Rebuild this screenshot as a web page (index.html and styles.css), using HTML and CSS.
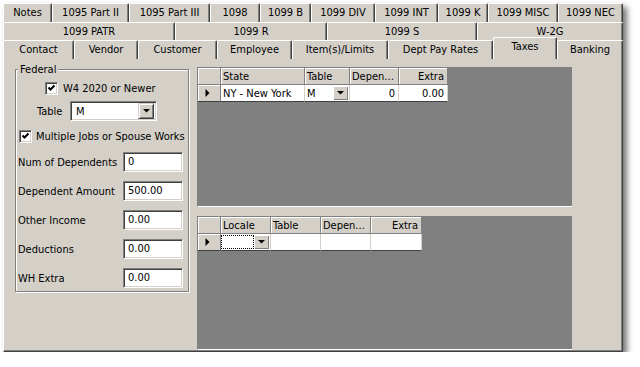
FILE: index.html
```html
<!DOCTYPE html>
<html>
<head>
<meta charset="utf-8">
<link rel="stylesheet" href="styles.css">
</head>
<body>
<div class="window">
  <div class="tabrow row1">
    <div class="tab">Notes</div>
    <div class="tab">1095 Part II</div>
    <div class="tab">1095 Part III</div>
    <div class="tab">1098</div>
    <div class="tab">1099 B</div>
    <div class="tab">1099 DIV</div>
    <div class="tab">1099 INT</div>
    <div class="tab">1099 K</div>
    <div class="tab">1099 MISC</div>
    <div class="tab">1099 NEC</div>
  </div>
  <div class="tabrow row2">
    <div class="tab">1099 PATR</div>
    <div class="tab">1099 R</div>
    <div class="tab">1099 S</div>
    <div class="tab">W-2G</div>
  </div>
  <div class="tabrow row3">
    <div class="tab">Contact</div>
    <div class="tab">Vendor</div>
    <div class="tab">Customer</div>
    <div class="tab">Employee</div>
    <div class="tab">Item(s)/Limits</div>
    <div class="tab">Dept Pay Rates</div>
    <div class="tab sel">Taxes</div>
    <div class="tab">Banking</div>
  </div>
  <div class="panel">
    <div class="group">
      <span class="legend">Federal</span>
      <div class="chkrow w4">
        <span class="chk"><svg width="9" height="9" viewBox="0 0 9 9"><path d="M1.5 3.5L3.5 5.5L7.5 1.5" fill="none" stroke="#000" stroke-width="2"/></svg></span>
        <span>W4 2020 or Newer</span>
      </div>
      <div class="tablerow">
        <span class="tlabel">Table</span>
        <div class="combo">
          <span class="val">M</span>
          <span class="dbtn"><svg width="7" height="4" viewBox="0 0 7 4"><path d="M0 0H7L3.5 3.6Z" fill="#000"/></svg></span>
        </div>
      </div>
      <div class="chkrow mj">
        <span class="chk"><svg width="9" height="9" viewBox="0 0 9 9"><path d="M1.5 3.5L3.5 5.5L7.5 1.5" fill="none" stroke="#000" stroke-width="2"/></svg></span>
        <span>Multiple Jobs or Spouse Works</span>
      </div>
      <div class="field"><span class="flabel">Num of Dependents</span><div class="input">0</div></div>
      <div class="field"><span class="flabel">Dependent Amount</span><div class="input">500.00</div></div>
      <div class="field"><span class="flabel">Other Income</span><div class="input">0.00</div></div>
      <div class="field"><span class="flabel">Deductions</span><div class="input">0.00</div></div>
      <div class="field"><span class="flabel">WH Extra</span><div class="input">0.00</div></div>
    </div>
    <div class="grids">
      <div class="grid upper">
        <table class="gt gt-upper">
          <colgroup><col class="w23"><col class="w84"><col class="w45"><col class="w49"><col class="w49"></colgroup>
          <tr><th class="ind"></th><th>State</th><th>Table</th><th>Depen...</th><th class="r">Extra</th></tr>
          <tr>
            <td class="ind"><svg width="5" height="8" viewBox="0 0 5 8"><path d="M0.5 0L4.5 4L0.5 8Z" fill="#000"/></svg></td>
            <td>NY - New York</td>
            <td class="cb"><div class="cellcombo"><span>M</span><span class="gbtn"><svg width="7" height="4" viewBox="0 0 7 4"><path d="M0 0H7L3.5 3.6Z" fill="#000"/></svg></span></div></td>
            <td class="r">0</td>
            <td class="r">0.00</td>
          </tr>
        </table>
      </div>
      <div class="grid lower">
        <table class="gt gt-lower">
          <colgroup><col class="w23"><col class="w50"><col class="w50"><col class="w50"><col class="w51"></colgroup>
          <tr><th class="ind"></th><th>Locale</th><th>Table</th><th>Depen...</th><th class="r">Extra</th></tr>
          <tr>
            <td class="ind"><svg width="5" height="8" viewBox="0 0 5 8"><path d="M0.5 0L4.5 4L0.5 8Z" fill="#000"/></svg></td>
            <td class="cb"><div class="cellcombo"><span class="focus"></span><span class="gbtn"><svg width="7" height="4" viewBox="0 0 7 4"><path d="M0 0H7L3.5 3.6Z" fill="#000"/></svg></span></div></td>
            <td></td>
            <td></td>
            <td></td>
          </tr>
        </table>
      </div>
    </div>
  </div>
</div>
</body>
</html>
```
FILE: styles.css
```css
* { box-sizing: border-box; }
html, body { margin: 0; background: #fff; }
body {
  font-family: "DejaVu Sans Condensed", "DejaVu Sans", sans-serif;
  font-stretch: condensed;
  font-size: 11px;
  color: #000;
}
.window {
  width: 620px;
  margin: 3px 0 0 3px;
  background: #d4d0c8;
  box-shadow: 4px 4px 6px rgba(0, 0, 0, 0.55);
}
.tabrow { display: grid; height: 18px; }
.row1 { height: 19px; grid-template-columns: 49px 77px 81px 50px 51px 64px 63px 50px 70px 65px; }
.row2 { grid-template-columns: 172px 152px 150px 146px; }
.row3 { grid-template-columns: 71px 64px 79px 75px 96px 105px 64px 66px; }
.tab {
  display: flex;
  align-items: center;
  justify-content: center;
  background: #d4d0c8;
  border-top: 1px solid #fff;
  border-left: 1px solid #fff;
  border-right: 1px solid #404040;
  box-shadow: inset -1px 0 #808080;
  border-radius: 2px 2px 0 0;
  white-space: nowrap;
  padding-bottom: 1px;
}
.tab.sel {
  margin-top: -3px;
  height: 22px;
  position: relative;
  z-index: 1;
  padding-bottom: 5px;
}
.panel {
  height: 294px;
  border: 1px solid;
  border-color: #fff #404040 #404040 #fff;
  box-shadow: inset -1px -1px #808080;
  display: flex;
  align-items: flex-start;
  gap: 8px;
  padding: 8px 0 0 11px;
}
.group {
  position: relative;
  width: 174px;
  height: 223px;
  margin-top: 2px;
  border: 1px solid #808080;
  box-shadow: inset 1px 1px #fff, 1px 1px #fff;
  display: flex;
  flex-direction: column;
}
.legend {
  position: absolute;
  top: -7px;
  left: 2px;
  padding: 0 2px;
  line-height: 13px;
  background: #d4d0c8;
}
.chkrow { display: flex; align-items: center; height: 13px; }
.chkrow.w4 { margin-top: 12px; padding-left: 29px; gap: 5px; }
.chkrow.mj { margin-top: 9px; padding-left: 3px; gap: 4px; }
.chk {
  width: 13px;
  height: 13px;
  flex: none;
  background: #fff;
  border: 1px solid;
  border-color: #808080 #fff #fff #808080;
  box-shadow: inset 1px 1px #404040, inset -1px -1px #d4d0c8;
  padding: 1px;
}
.chk svg { display: block; }
.tablerow { display: flex; align-items: center; height: 20px; margin-top: 6px; padding-left: 21px; }
.tlabel { width: 33px; }
.combo, .input {
  background: #fff;
  border: 1px solid;
  border-color: #808080 #fff #fff #808080;
  box-shadow: inset 1px 1px #404040, inset -1px -1px #d4d0c8;
  height: 20px;
}
.combo {
  width: 87px;
  display: flex;
  align-items: center;
  justify-content: space-between;
  padding: 0 2px 0 5px;
}
.dbtn {
  width: 16px;
  height: 16px;
  background: #d4d0c8;
  border: 1px solid;
  border-color: #d4d0c8 #404040 #404040 #d4d0c8;
  box-shadow: inset 1px 1px #fff, inset -1px -1px #808080;
  display: flex;
  align-items: center;
  justify-content: center;
}
.dbtn svg { display: block; }
.field { display: flex; align-items: center; height: 20px; margin-top: 9px; padding-left: 2px; }
.flabel { width: 105px; white-space: nowrap; }
.input { width: 60px; padding: 0 3px 0 4px; line-height: 18px; }
.grids { display: flex; flex-direction: column; gap: 9px; width: 375px; }
.grid {
  background: #808080;
  border-top: 1px solid #808080;
  border-left: 1px solid #808080;
  border-bottom: 1px solid #fff;
}
.upper { height: 140px; }
.lower { height: 134px; }
.gt { border-collapse: separate; border-spacing: 0; table-layout: fixed; }
.gt-upper { width: 250px; }
.gt-lower { width: 224px; }
.w23 { width: 23px; }
.w84 { width: 84px; }
.w45 { width: 45px; }
.w49 { width: 49px; }
.w50 { width: 50px; }
.w51 { width: 51px; }
.gt th, .gt td {
  height: 17px;
  padding: 0 2px;
  font-weight: normal;
  text-align: left;
  white-space: nowrap;
  overflow: hidden;
  vertical-align: middle;
}
.gt th {
  background: #d4d0c8;
  border-right: 1px solid #808080;
  border-bottom: 1px solid #808080;
  box-shadow: inset 1px 1px #fff;
}
.gt td {
  background: #fff;
  border-right: 1px solid #d4d0c8;
  border-bottom: 1px solid #404040;
}
.gt td.ind {
  background: #d4d0c8;
  border-right: 1px solid #808080;
  box-shadow: inset 1px 1px #fff;
  padding-left: 7px;
}
.gt td.ind svg { display: block; }
.gt .r { text-align: right; padding-right: 3px; }
.gt td.cb { padding: 0 1px 0 2px; }
.gt-lower td.cb { padding-left: 0; }
.cellcombo { display: flex; align-items: center; justify-content: space-between; height: 16px; }
.gbtn {
  width: 15px;
  height: 14px;
  background: #d4d0c8;
  box-shadow: inset 1px 1px #fff, inset -1px -1px #808080;
  display: flex;
  align-items: center;
  justify-content: center;
}
.gbtn svg { display: block; }
.focus { width: 33px; height: 14px; border: 1px dotted #000; }
```
